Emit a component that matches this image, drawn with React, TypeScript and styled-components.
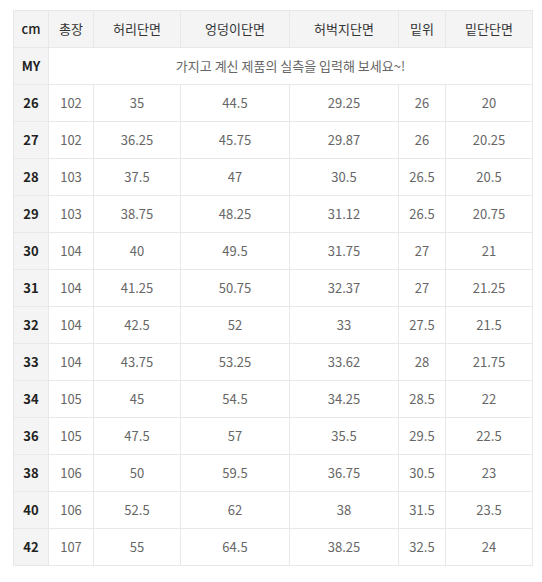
import styled, { createGlobalStyle } from "styled-components";

const GlobalStyle = createGlobalStyle`
  body {
    margin: 0;
    background: #fff;
    font-family: "Noto Sans CJK KR", "Noto Sans", sans-serif;
  }
`;

const Wrapper = styled.div`
  padding: 10px 10px 0 13px;
`;

const Table = styled.table`
  width: 520px;
  border-collapse: collapse;
  table-layout: fixed;
  font-size: 13px;
`;

const Row = styled.tr`
  height: 37px;
`;

const Cell = styled.td<{ $head?: boolean }>`
  box-sizing: border-box;
  height: 37px;
  padding: 0;
  border: 1px solid #e8e8e8;
  text-align: center;
  vertical-align: middle;
  font-weight: 400;
  color: ${(p) => (p.$head ? "#333" : "#666")};
  background: ${(p) => (p.$head ? "#f4f4f4" : "#fff")};
  line-height: 16px;
`;

const SizeCell = styled(Cell)<{ $light?: boolean }>`
  font-weight: ${(p) => (p.$light ? 500 : 700)};
  color: #222;
  background: #f4f4f4;
`;

const cols = [35, 45, 87, 109, 109, 47, 87];
const heads = ["총장", "허리단면", "엉덩이단면", "허벅지단면", "밑위", "밑단단면"];

const rows: [string, string[]][] = [
  ["26", ["102", "35", "44.5", "29.25", "26", "20"]],
  ["27", ["102", "36.25", "45.75", "29.87", "26", "20.25"]],
  ["28", ["103", "37.5", "47", "30.5", "26.5", "20.5"]],
  ["29", ["103", "38.75", "48.25", "31.12", "26.5", "20.75"]],
  ["30", ["104", "40", "49.5", "31.75", "27", "21"]],
  ["31", ["104", "41.25", "50.75", "32.37", "27", "21.25"]],
  ["32", ["104", "42.5", "52", "33", "27.5", "21.5"]],
  ["33", ["104", "43.75", "53.25", "33.62", "28", "21.75"]],
  ["34", ["105", "45", "54.5", "34.25", "28.5", "22"]],
  ["36", ["105", "47.5", "57", "35.5", "29.5", "22.5"]],
  ["38", ["106", "50", "59.5", "36.75", "30.5", "23"]],
  ["40", ["106", "52.5", "62", "38", "31.5", "23.5"]],
  ["42", ["107", "55", "64.5", "38.25", "32.5", "24"]],
];

export default function App() {
  return (
    <Wrapper>
      <GlobalStyle />
      <Table>
        <colgroup>
          {cols.map((w, i) => (
            <col key={i} style={{ width: w }} />
          ))}
        </colgroup>
        <tbody>
          <Row>
            <SizeCell as="th" $light>cm</SizeCell>
            {heads.map((h) => (
              <Cell as="th" key={h} $head>
                {h}
              </Cell>
            ))}
          </Row>
          <Row>
            <SizeCell>MY</SizeCell>
            <Cell colSpan={6}>가지고 계신 제품의 실측을 입력해 보세요~!</Cell>
          </Row>
          {rows.map(([size, vals]) => (
            <Row key={size}>
              <SizeCell>{size}</SizeCell>
              {vals.map((v, i) => (
                <Cell key={i}>{v}</Cell>
              ))}
            </Row>
          ))}
        </tbody>
      </Table>
    </Wrapper>
  );
}
